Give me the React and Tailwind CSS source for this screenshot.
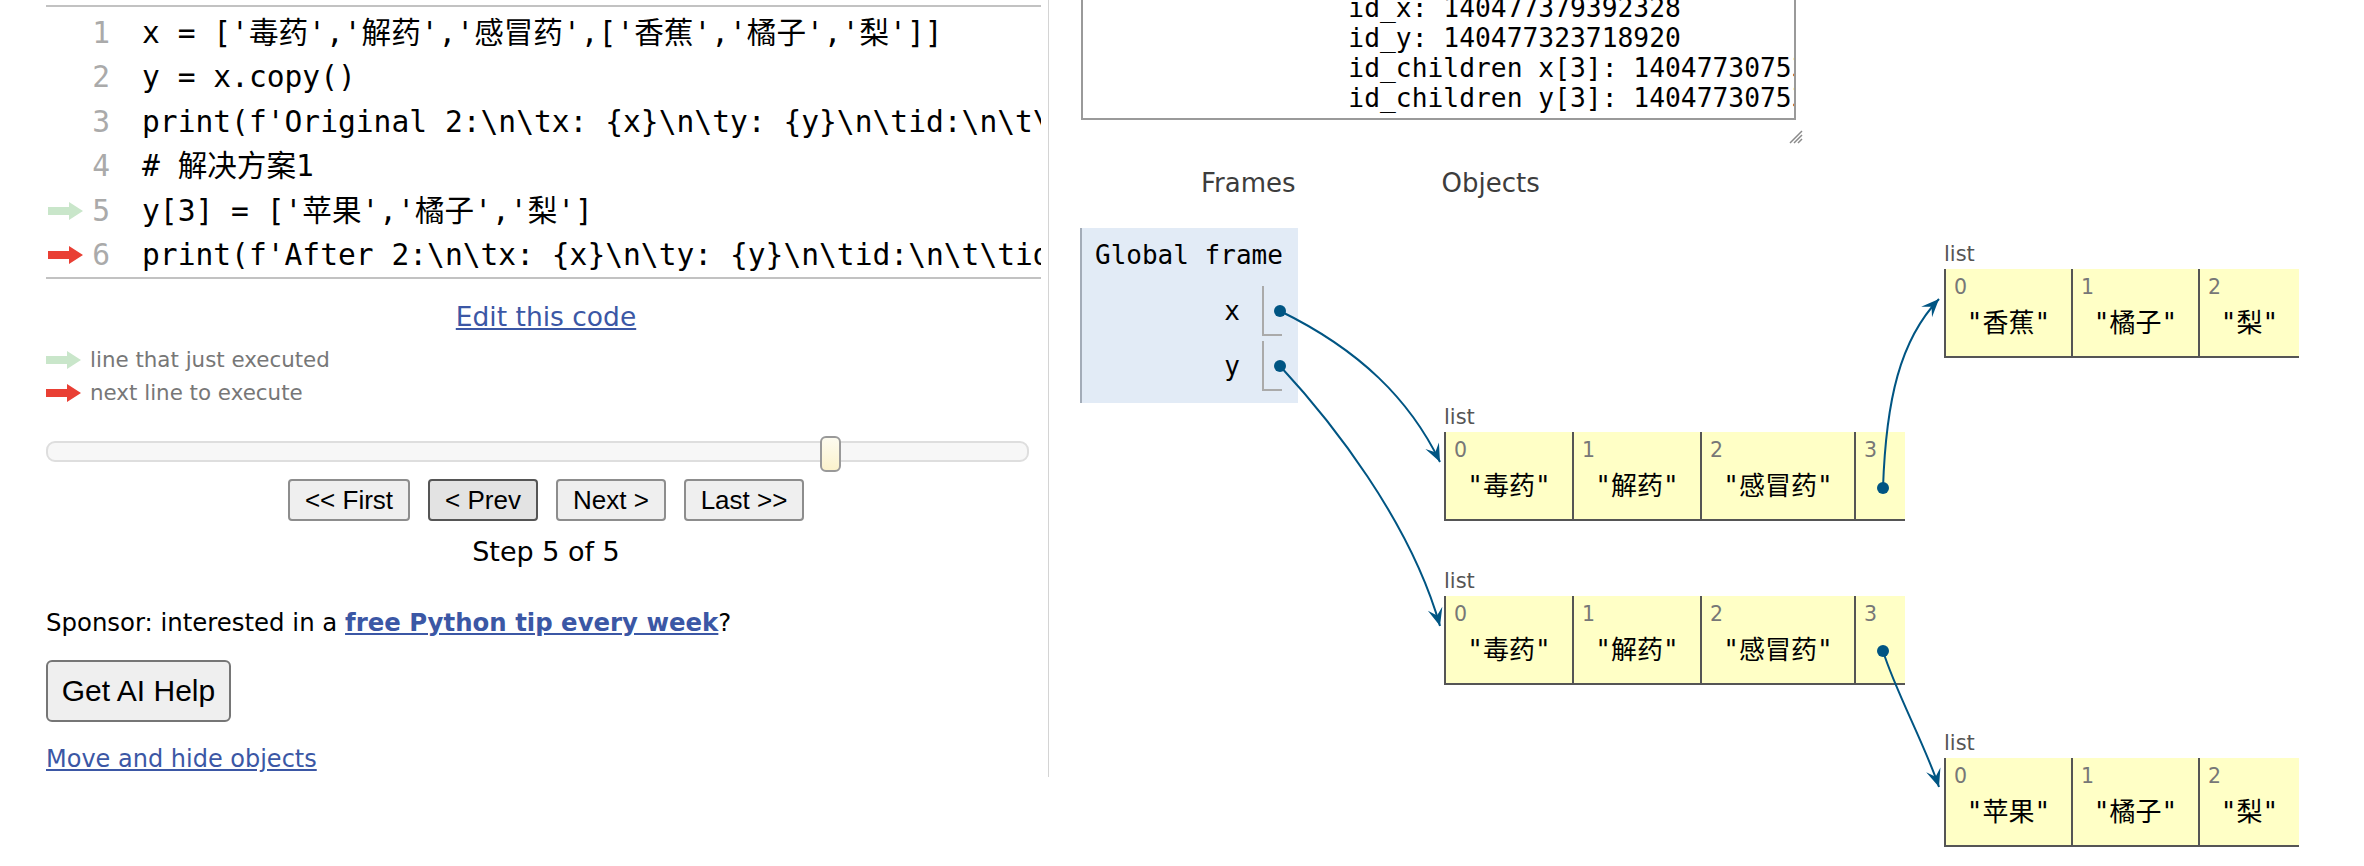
import React from 'react'

// Python Tutor style step view: code + controls on the left, frames/objects diagram on the right
const MONO = "font-['DejaVu_Sans_Mono','Noto_Sans_CJK_SC',monospace]"
const SANS = "font-['DejaVu_Sans','Noto_Sans_CJK_SC',sans-serif]"
const ARIAL = "font-['Liberation_Sans',Arial,sans-serif]"
const LINK = 'text-[#3b57a5] underline'

const code = [
  "x = ['毒药','解药','感冒药',['香蕉','橘子','梨']]",
  'y = x.copy()',
  "print(f'Original 2:\\n\\tx: {x}\\n\\ty: {y}\\n\\tid:\\n\\t\\tid_x: {id(x)}\\n\\t\\tid_y: {id(y)}')",
  '# 解决方案1',
  "y[3] = ['苹果','橘子','梨']",
  "print(f'After 2:\\n\\tx: {x}\\n\\ty: {y}\\n\\tid:\\n\\t\\tid_x: {id(x)}\\n\\t\\tid_y: {id(y)}')",
]

const output = [
  'Original 2:',
  "\tx: ['毒药', '解药', '感冒药', ['香蕉', '橘子', '梨']]",
  "\ty: ['毒药', '解药', '感冒药', ['香蕉', '橘子', '梨']]",
  '\tid:',
  '\t\tid_x: 140477379392328',
  '\t\tid_y: 140477323718920',
  '\t\tid_children x[3]: 140477307537216',
  '\t\tid_children y[3]: 140477307537216',
]

function LineArrow({ color }) {
  return (
    <svg width="35" height="18" viewBox="0 0 35 18" className="block shrink-0">
      <polygon points="0,5 21,5 21,0 35,9 21,18 21,13 0,13" fill={color} />
    </svg>
  )
}

function VcrButton({ label, w, pressed }) {
  return (
    <button
      className={`${w} h-[42px] rounded-[4px] border-2 text-[26px] leading-none text-black ${ARIAL} ${
        pressed ? 'bg-[#e3e3e3] border-[#555]' : 'bg-[#efefef] border-[#8d8d8d]'
      }`}
    >
      {label}
    </button>
  )
}

function HeapList({ left, top, cells }) {
  return (
    <div className="absolute" style={{ left, top: top - 30 }}>
      <div className={`h-[30px] leading-[30px] text-[21px] text-[#555] ${SANS}`}>list</div>
      <div className="flex">
        {cells.map((c, i) => (
          <div key={i} className="shrink-0 h-[89px] border-l-2 border-b-2 border-[#555] bg-[#ffffc6]" style={{ width: c.w }}>
            <div className={`h-[36px] leading-[36px] pl-[8px] text-[20.5px] text-[#777] ${SANS}`}>{i}</div>
            <div className={`h-[36px] leading-[36px] text-center text-[26px] text-black whitespace-pre ${MONO}`}>
              {c.v ? `"${c.v}"` : ''}
            </div>
          </div>
        ))}
      </div>
    </div>
  )
}

function head(tx, ty, dx, dy, L = 18, W = 7.5, fold = 0.6) {
  const len = Math.hypot(dx, dy)
  const ux = dx / len
  const uy = dy / len
  const px = -uy
  const py = ux
  const bx = tx - ux * L
  const by = ty - uy * L
  const nx = tx - ux * L * fold
  const ny = ty - uy * L * fold
  return `${tx},${ty} ${bx + px * W},${by + py * W} ${nx},${ny} ${bx - px * W},${by - py * W}`
}

const arrows = [
  { d: 'M200,111 C280,150 330,200 360,262', tip: [360, 262], dir: [30, 62] },
  { d: 'M200,166 C250,220 330,320 360,426', tip: [360, 426], dir: [30, 106] },
  { d: 'M803,288 C806,200 820,140 859,99', tip: [859, 99], dir: [39, -41] },
  { d: 'M803,451 C815,490 845,545 859,587', tip: [859, 587], dir: [14, 42] },
]

export default function App() {
  return (
    <div className="flex w-[2364px] h-[866px] overflow-hidden bg-white text-black">
      {/* Left: code + controls */}
      <div className="w-[1049px] h-[777px] shrink-0 border-r border-[#d4d4d4] pl-[46px]">
        <div className="w-[1000px] flex flex-col">
          <div className="mt-[5px] w-[995px] border-y-2 border-[#c2c2c2] pt-[4px] overflow-hidden">
            {code.map((line, i) => (
              <div key={i} className={`flex items-center h-[44.4px] leading-[44.4px] text-[29.6px] ${MONO}`}>
                <div className="w-[37px] shrink-0 pl-[2px] flex items-center">
                  {i === 4 && <LineArrow color="#c9e6ca" />}
                  {i === 5 && <LineArrow color="#e93f34" />}
                </div>
                <div className="w-[27px] shrink-0 text-right text-[#aaa]">{i + 1}</div>
                <div className="ml-[32px] shrink-0 whitespace-pre">{line}</div>
              </div>
            ))}
          </div>

          <div className={`mt-[21.6px] h-[32px] leading-[32px] text-center text-[26.5px] ${SANS}`}>
            <a className={LINK}>Edit this code</a>
          </div>

          <div className={`mt-[10.5px] text-[21.4px] leading-[33px] text-[#777] ${SANS}`}>
            <div className="flex items-center">
              <LineArrow color="#c9e6ca" />
              <span className="ml-[9px]">line that just executed</span>
            </div>
            <div className="flex items-center">
              <LineArrow color="#e93f34" />
              <span className="ml-[9px]">next line to execute</span>
            </div>
          </div>

          <div className="relative mt-[31.5px] w-[983px] h-[21px] rounded-[9px] border-2 border-[#dedede] bg-[#f7f7f7]">
            <div className="absolute left-[772px] top-[-7px] w-[21px] h-[36px] rounded-[6px] border-2 border-[#999] bg-gradient-to-b from-[#fdfbef] to-[#fbf2cc]" />
          </div>

          <div className="mt-[17px] flex justify-center gap-[18px]">
            <VcrButton label="<< First" w="w-[122px]" />
            <VcrButton label="< Prev" w="w-[110px]" pressed />
            <VcrButton label="Next >" w="w-[110px]" />
            <VcrButton label="Last >>" w="w-[120px]" />
          </div>

          <div className={`mt-[15px] h-[32px] leading-[32px] text-center text-[27px] ${SANS}`}>Step 5 of 5</div>

          <div className={`mt-[39px] h-[32px] leading-[32px] text-[24.4px] ${SANS}`}>
            Sponsor: interested in a <a className={`${LINK} font-bold`}>free Python tip every week</a>?
          </div>

          <div className="mt-[21px]">
            <button className={`w-[185px] h-[62px] rounded-[6px] border-2 border-[#767676] bg-[#efefef] text-[30px] ${ARIAL}`}>
              Get AI Help
            </button>
          </div>

          <div className={`mt-[21px] h-[32px] leading-[32px] text-[24px] ${SANS}`}>
            <a className={LINK}>Move and hide objects</a>
          </div>
        </div>
      </div>

      {/* Right: program output + visualisation */}
      <div className="flex-1 pl-[31px] flex flex-col">
        <div className="relative ml-[1px] w-[715px] mt-[-20px]">
          <div className="h-[140px] border-2 border-[#9a9a9a] flex flex-col justify-end overflow-hidden pl-[12px] pb-[5px]">
            {output.map((l, i) => (
              <div key={i} className={`whitespace-pre leading-[30px] text-[26.3px] [tab-size:8] ${MONO}`}>{l}</div>
            ))}
          </div>
          <svg className="absolute right-[-7px] bottom-[-24px]" width="16" height="16" viewBox="0 0 16 16">
            <path d="M15 3 L3 15 M15 7 L7 15 M15 11 L11 15" stroke="#8a8a8a" strokeWidth="1.5" />
          </svg>
        </div>

        <div className={`mt-[47px] h-[32px] leading-[32px] flex text-[26px] text-[#3d3d3d] ${SANS}`}>
          <span className="ml-[121px]">Frames</span>
          <span className="ml-[146px]">Objects</span>
        </div>

        <div className="relative mt-[1px] flex-1">
          <div className="absolute left-0 top-[28px] w-[218px] h-[175px] bg-[#e2ebf6] border-l-2 border-[#a3acb8] pt-[12px]">
            <div className={`pl-[13px] h-[30px] leading-[30px] text-[26px] ${MONO}`}>Global frame</div>
            {['x', 'y'].map((n, i) => (
              <div key={n} className={`flex justify-end items-center pr-[16px] ${i === 0 ? 'mt-[16px]' : 'mt-[5px]'}`}>
                <span className={`text-[26px] leading-[30px] ${MONO}`}>{n}</span>
                <div className="ml-[22px] w-[20px] h-[50px] border-l-2 border-b-2 border-[#aaa]" />
              </div>
            ))}
          </div>

          <HeapList left={364} top={232} cells={[{ w: 128, v: '毒药' }, { w: 128, v: '解药' }, { w: 154, v: '感冒药' }, { w: 51 }]} />
          <HeapList left={364} top={396} cells={[{ w: 128, v: '毒药' }, { w: 128, v: '解药' }, { w: 154, v: '感冒药' }, { w: 51 }]} />
          <HeapList left={864} top={69} cells={[{ w: 127, v: '香蕉' }, { w: 127, v: '橘子' }, { w: 101, v: '梨' }]} />
          <HeapList left={864} top={558} cells={[{ w: 127, v: '苹果' }, { w: 127, v: '橘子' }, { w: 101, v: '梨' }]} />

          <svg className="absolute inset-0 w-full h-full pointer-events-none overflow-visible">
            {arrows.map((a, i) => (
              <g key={i}>
                <path d={a.d} fill="none" stroke="#005583" strokeWidth="2" />
                <polygon points={head(a.tip[0], a.tip[1], a.dir[0], a.dir[1])} fill="#005583" />
              </g>
            ))}
            {[[200, 111], [200, 166], [803, 288], [803, 451]].map(([cx, cy], i) => (
              <circle key={i} cx={cx} cy={cy} r="6" fill="#005583" />
            ))}
          </svg>
        </div>
      </div>
    </div>
  )
}
